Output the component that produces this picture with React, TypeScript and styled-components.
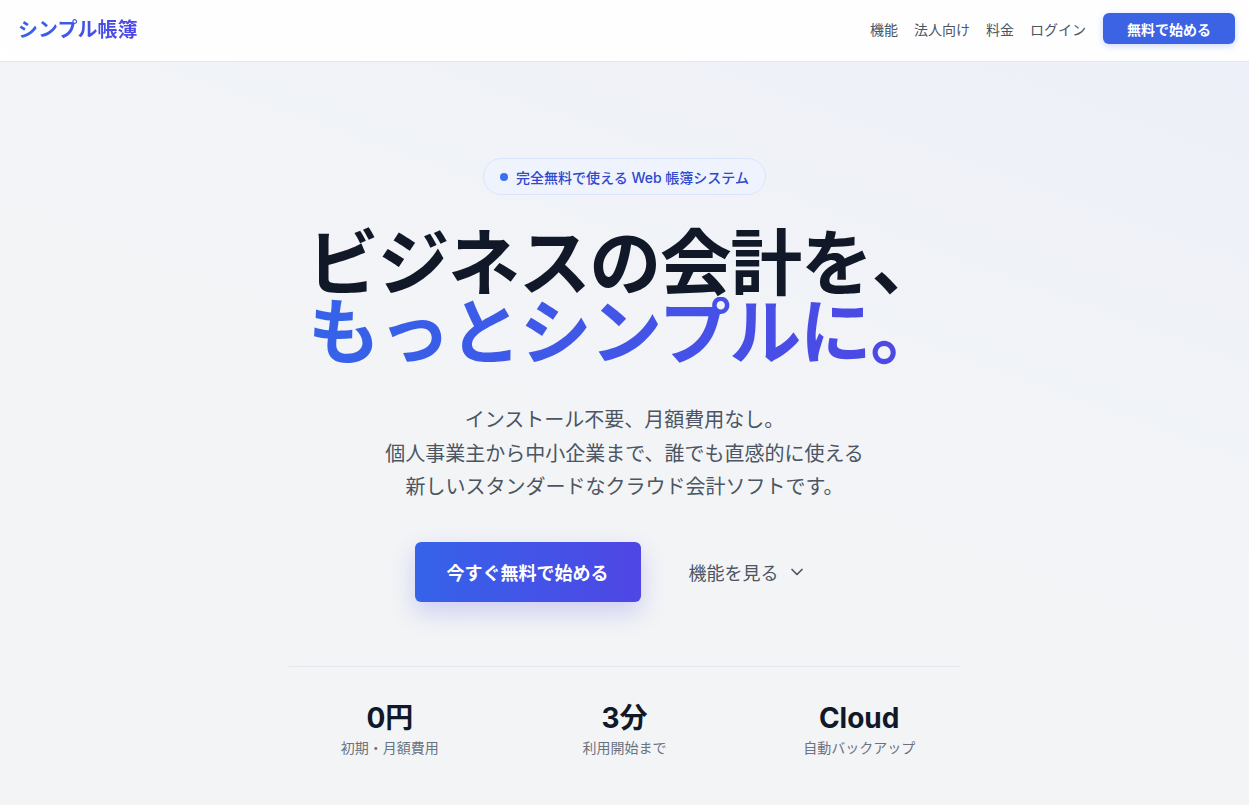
import React from 'react';
import styled, { createGlobalStyle } from 'styled-components';
import { ChevronDown } from 'lucide-react';

const GlobalStyle = createGlobalStyle`
    * {
        box-sizing: border-box;
    }

    html,
    body {
        margin: 0;
        padding: 0;
    }

    body {
        font-family: Inter, 'Noto Sans CJK JP', 'Noto Sans', sans-serif;
        color: #111827;
        background: #f3f4f6;
        -webkit-font-smoothing: antialiased;
    }
`;

const navLinks = ['機能', '法人向け', '料金', 'ログイン'];

const stats = [
    { value: '0円', label: '初期・月額費用' },
    { value: '3分', label: '利用開始まで' },
    { value: 'Cloud', label: '自動バックアップ' },
];

const App = () => {
    return (
        <Page>
            <GlobalStyle />
            <Header>
                <Logo>シンプル帳簿</Logo>
                <Nav>
                    {navLinks.map((link) => (
                        <NavLink key={link}>{link}</NavLink>
                    ))}
                    <NavButton>無料で始める</NavButton>
                </Nav>
            </Header>

            <Hero>
                <Badge>
                    <BadgeDot />
                    完全無料で使える Web 帳簿システム
                </Badge>
                <Headline>
                    <HeadLine>ビジネスの会計を、</HeadLine>
                    <Accent>もっとシンプルに。</Accent>
                </Headline>
                <Lead>
                    インストール不要、月額費用なし。
                    <br />
                    個人事業主から中小企業まで、誰でも直感的に使える
                    <br />
                    新しいスタンダードなクラウド会計ソフトです。
                </Lead>
                <Actions>
                    <PrimaryButton>今すぐ無料で始める</PrimaryButton>
                    <GhostButton>
                        機能を見る
                        <ChevronDown size={20} strokeWidth={2} />
                    </GhostButton>
                </Actions>
                <Stats>
                    {stats.map((stat) => (
                        <Stat key={stat.label}>
                            <StatValue>{stat.value}</StatValue>
                            <StatLabel>{stat.label}</StatLabel>
                        </Stat>
                    ))}
                </Stats>
            </Hero>
        </Page>
    );
};

export default App;

const Page = styled.div`
    min-height: 805px;
    background: linear-gradient(200deg, #eceff8 0%, #f2f4f7 45%, #f3f4f6 100%);
`;

const Header = styled.header`
    height: 62px;
    display: flex;
    align-items: center;
    justify-content: space-between;
    padding: 0 14px 4px 18px;
    background: rgba(255, 255, 255, 0.92);
    border-bottom: 1px solid #e5e7eb;
`;

const Logo = styled.div`
    font-size: 20px;
    font-weight: 700;
    background: linear-gradient(90deg, #3563e9, #4f46e5);
    -webkit-background-clip: text;
    background-clip: text;
    color: transparent;
`;

const Nav = styled.nav`
    display: flex;
    align-items: center;
    gap: 16px;
    padding-left: 2px;
`;

const NavLink = styled.a`
    font-size: 14px;
    color: #4b5563;
    cursor: pointer;
`;

const NavButton = styled.button`
    margin-left: 1px;
    height: 31px;
    padding: 0 24px;
    border: none;
    border-radius: 6px;
    background: #3b63e4;
    color: #fff;
    font-family: inherit;
    font-size: 14px;
    font-weight: 700;
    box-shadow: 0 2px 6px rgba(59, 99, 228, 0.25);
    cursor: pointer;
`;

const Hero = styled.main`
    display: flex;
    flex-direction: column;
    align-items: center;
    padding-top: 96px;
    text-align: center;
`;

const Badge = styled.div`
    display: inline-flex;
    align-items: center;
    gap: 8px;
    height: 37px;
    padding: 0 16px;
    border: 1px solid #dbe4fd;
    border-radius: 999px;
    background: #eef3fe;
    color: #2f49cc;
    font-size: 14px;
    font-weight: 500;
`;

const BadgeDot = styled.span`
    width: 8px;
    height: 8px;
    border-radius: 50%;
    background: #3b6ff0;
`;

const Headline = styled.h1`
    margin: 33px 0 0;
    font-size: 72px;
    font-weight: 700;
    line-height: 69px;
    letter-spacing: -0.02em;
    color: #111827;
`;

const HeadLine = styled.span`
    display: block;
`;

const Accent = styled.span`
    display: block;
    background: linear-gradient(90deg, #3563e9 0%, #4f46e5 100%);
    -webkit-background-clip: text;
    background-clip: text;
    color: transparent;
`;

const Lead = styled.p`
    margin: 38px 0 0;
    font-size: 20px;
    line-height: 33.5px;
    color: #4b5563;
`;

const Actions = styled.div`
    display: flex;
    align-items: center;
    gap: 20px;
    margin-top: 37px;
`;

const PrimaryButton = styled.button`
    width: 226px;
    height: 60px;
    border: none;
    border-radius: 6px;
    background: linear-gradient(90deg, #3563e9, #4f46e5);
    color: #fff;
    font-family: inherit;
    font-size: 18px;
    font-weight: 700;
    box-shadow: 0 10px 24px rgba(79, 70, 229, 0.22);
    cursor: pointer;
`;

const GhostButton = styled.button`
    display: flex;
    align-items: center;
    gap: 8px;
    height: 60px;
    padding: 0 28px;
    border: none;
    background: none;
    color: #4b5563;
    font-family: inherit;
    font-size: 18px;
    cursor: pointer;
`;

const Stats = styled.section`
    width: 672px;
    margin-top: 64px;
    padding-top: 33px;
    border-top: 1px solid #e3e7ef;
    display: grid;
    grid-template-columns: repeat(3, 1fr);
    gap: 32px;
`;

const Stat = styled.div`
    display: flex;
    flex-direction: column;
    align-items: center;
`;

const StatValue = styled.div`
    font-size: 28px;
    font-weight: 700;
    line-height: 36px;
    color: #111827;
`;

const StatLabel = styled.div`
    margin-top: 2px;
    font-size: 14px;
    line-height: 20px;
    color: #6b7280;
`;
